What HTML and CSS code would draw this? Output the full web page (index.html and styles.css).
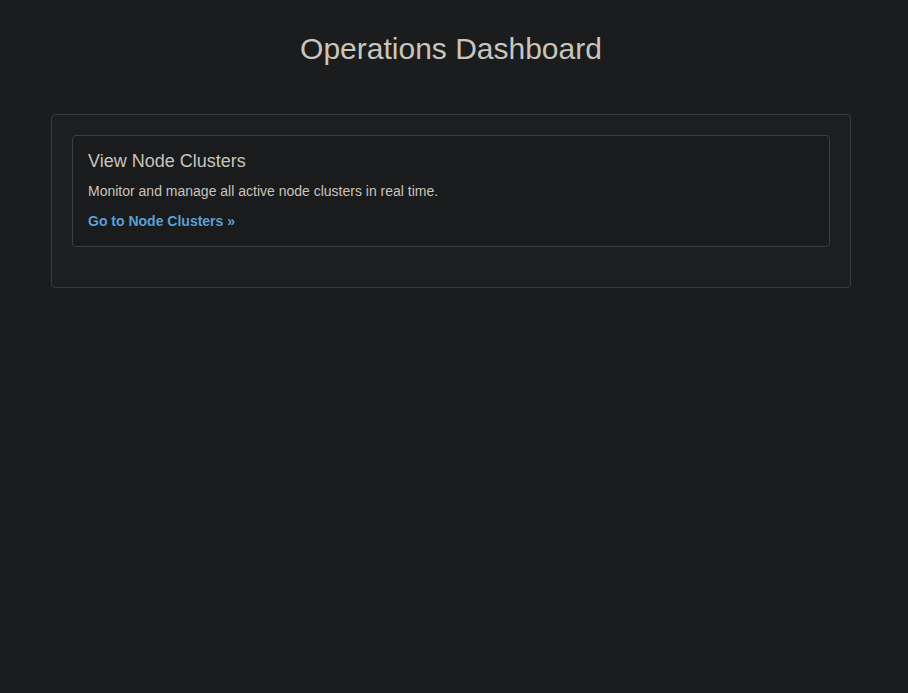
FILE: index.html
```html
<!DOCTYPE html>
<html>
<head>
<meta charset="utf-8">
<title>Operations Dashboard</title>
<link rel="stylesheet" href="styles.css">
</head>
<body>
<h1 class="page-title">Operations Dashboard</h1>
<div class="panel">
  <div class="card">
    <h2 class="card-title">View Node Clusters</h2>
    <p class="card-text">Monitor and manage all active node clusters in real time.</p>
    <a class="card-link" href="#">Go to Node Clusters »</a>
  </div>
</div>
</body>
</html>
```
FILE: styles.css
```css
html, body {
  margin: 0;
  padding: 0;
  background: #1b1c1e;
}
body {
  font-family: "Liberation Sans", Arial, sans-serif;
  color: #c9c4bc;
  padding: 32px 6px 0 0;
}
.page-title {
  margin: 0 0 48px;
  font-size: 30px;
  font-weight: normal;
  line-height: 34px;
  text-align: center;
  color: #c9c4bc;
}
.panel {
  width: 800px;
  box-sizing: border-box;
  margin: 0 auto;
  padding: 20px 20px 40px;
  background: #1c1f20;
  border: 1px solid #383b3e;
  border-radius: 4px;
}
.card {
  background: #1a1b1d;
  border: 1px solid #3c3f42;
  border-radius: 4px;
  padding: 15px 15px 16px;
}
.card-title {
  margin: 0 0 11px;
  font-size: 18px;
  font-weight: normal;
  line-height: 21px;
  color: #c9c4bc;
}
.card-text {
  margin: 0 0 13px;
  font-size: 14px;
  line-height: 16px;
}
.card-link {
  display: inline-block;
  font-size: 14px;
  line-height: 16px;
  font-weight: bold;
  color: #5a9fd6;
  text-decoration: none;
}
```
